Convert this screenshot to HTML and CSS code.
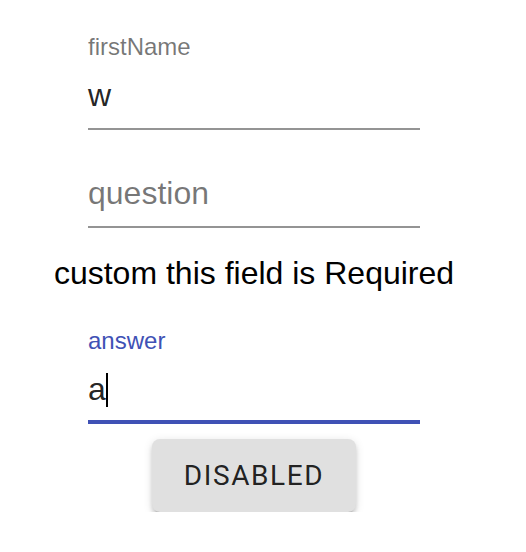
FILE: index.html
```html
<!DOCTYPE html>
<html lang="en">
<head>
    <meta charset="UTF-8">
    <meta name="viewport" content="width=device-width, initial-scale=1.0">
    <title>Form</title>
    <link rel="stylesheet" href="styles.css">
</head>
<body>
    <div class="page">
        <div class="field">
            <div class="field-label">firstName</div>
            <div class="field-input">w</div>
        </div>
        <div class="field">
            <div class="field-label"></div>
            <div class="field-input placeholder">question</div>
        </div>
        <p class="error-text">custom this field is Required</p>
        <div class="field focused">
            <div class="field-label">answer</div>
            <div class="field-input">a<span class="caret"></span></div>
        </div>
        <button class="btn">Disabled</button>
    </div>
</body>
</html>
```

FILE: styles.css
```css
body {
    margin: 0;
    background: #fff;
    font-family: 'Liberation Sans', Arial, Helvetica, sans-serif;
}

.page {
    width: 508px;
    padding-top: 32px;
    display: flex;
    flex-direction: column;
    align-items: center;
}

.field {
    width: 332px;
    display: flex;
    flex-direction: column;
}

.field-label {
    height: 32px;
    box-sizing: border-box;
    padding-top: 3px;
    font-size: 24px;
    line-height: 24px;
    color: rgba(0, 0, 0, 0.54);
}

.field-input {
    padding: 12px 0 14px;
    font-size: 32px;
    line-height: 38px;
    height: 38px;
    color: rgba(0, 0, 0, 0.87);
    border-bottom: 2px solid rgba(0, 0, 0, 0.42);
}

.field-input.placeholder {
    color: rgba(0, 0, 0, 0.54);
}

.focused .field-label {
    color: #3f51b5;
}

.focused .field-input {
    padding-bottom: 12px;
    border-bottom: 4px solid #3f51b5;
}

.caret {
    display: inline-block;
    vertical-align: top;
    width: 2px;
    height: 34px;
    margin-top: 3px;
    background: #000;
}

.error-text {
    margin: 27px 0 34px;
    font-size: 32px;
    color: #000;
}

.btn {
    margin-top: 15px;
    padding: 12px 32px;
    min-width: 128px;
    border: none;
    border-radius: 8px;
    background-color: #e0e0e0;
    color: rgba(0, 0, 0, 0.87);
    font-family: Roboto, 'Liberation Sans', sans-serif;
    font-size: 28px;
    font-weight: 400;
    line-height: 49px;
    letter-spacing: 1.6px;
    text-transform: uppercase;
    box-shadow: 0 6px 2px -4px rgba(0, 0, 0, 0.2),
                0 4px 4px 0 rgba(0, 0, 0, 0.14),
                0 2px 10px 0 rgba(0, 0, 0, 0.12);
}
```
